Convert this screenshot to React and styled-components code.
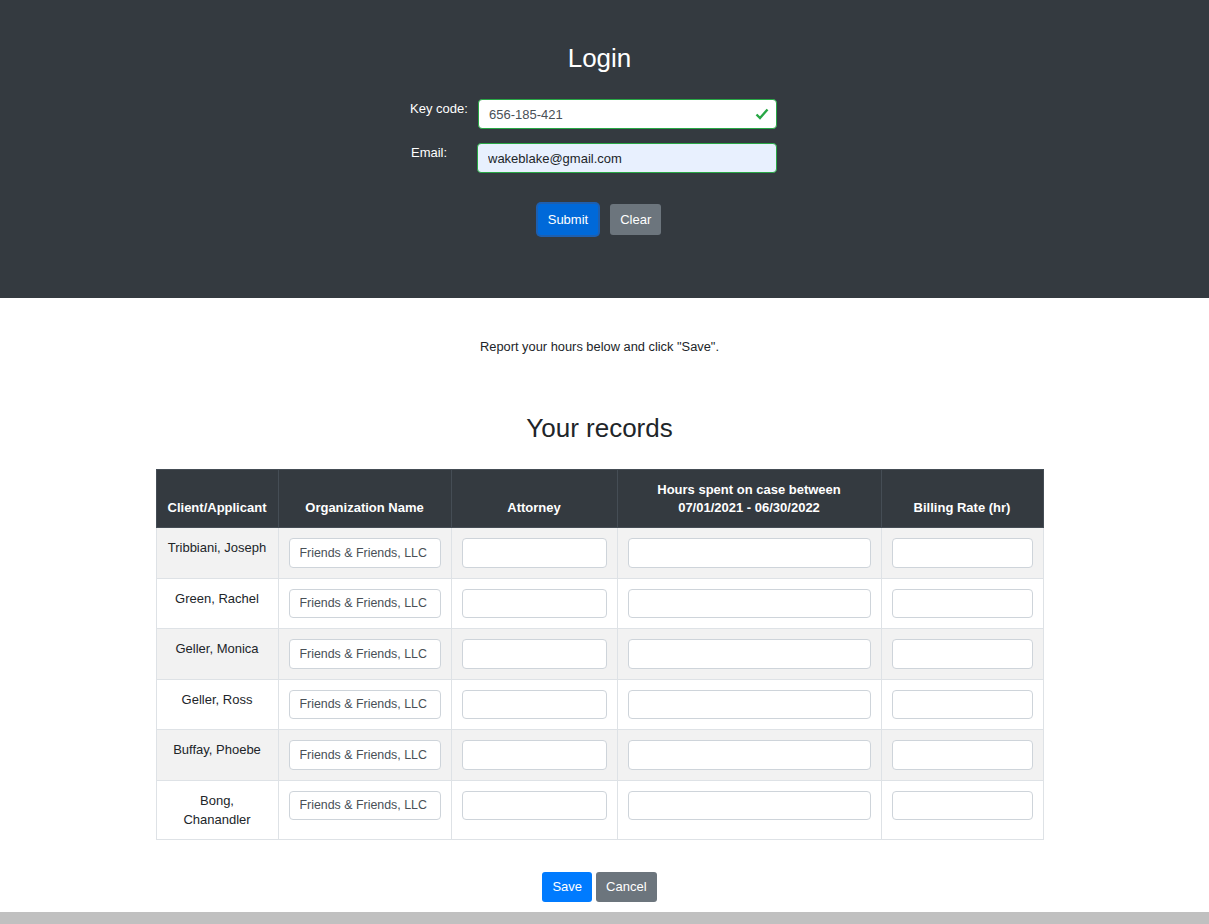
import { PureComponent } from "react";
import styled, { createGlobalStyle } from "styled-components";

const GlobalStyle = createGlobalStyle`
  body {
    margin: 0;
    font-family: "Liberation Sans", Arial, sans-serif;
    font-size: 13px;
    color: #212529;
    background: #fff;
  }
  * { box-sizing: border-box; }
`;

const Page = styled.div`
  padding-right: 10px;
`;

const LoginPanel = styled.section`
  background: #343a40;
  height: 298px;
  padding-top: 41px;
  margin-right: -10px;
  padding-right: 10px;
  color: #fff;
`;

const Title = styled.h2`
  margin: 0;
  text-align: center;
  font-weight: 400;
  font-size: 26px;
  line-height: 34px;
  color: ${(props) => props.color || "#212529"};
`;

const LoginForm = styled.div`
  width: 379px;
  padding-right: 12px;
  margin: 24px auto 0 auto;
  display: grid;
  grid-template-columns: 68px 299px;
  row-gap: 14px;
`;

const Label = styled.label`
  font-size: 13px;
  line-height: 18px;
  padding-top: 1px;
  color: #fff;
  padding-left: ${(props) => props.indent || 0}px;
`;

const FieldWrap = styled.div`
  position: relative;
  margin-left: ${(props) => props.nudge || 0}px;
`;

const TextField = styled.input`
  width: 100%;
  height: ${(props) => props.h || 30}px;
  padding: 0 10px;
  font-family: "Liberation Sans", Arial, sans-serif;
  font-size: ${(props) => props.size || 13}px;
  color: ${(props) => (props.filled ? "#212529" : "#495057")};
  background: ${(props) => (props.filled ? "#e8f0fe" : "#fff")};
  border: 1px solid ${(props) => (props.valid ? "#28a745" : "#ced4da")};
  border-radius: 4px;
  outline: none;
`;

const Check = styled.svg`
  position: absolute;
  right: 8px;
  top: 8px;
`;

const ButtonRow = styled.div`
  display: flex;
  justify-content: center;
  align-items: center;
  gap: ${(props) => props.gap}px;
  margin-top: ${(props) => props.top}px;
`;

const Button = styled.button`
  height: ${(props) => props.h || 31}px;
  padding: 0 10px;
  border: none;
  border-radius: 3px;
  font-family: "Liberation Sans", Arial, sans-serif;
  font-size: 13px;
  color: #fff;
  background: ${(props) =>
    props.variant === "secondary" ? "#6c757d" : props.focused ? "#0069d9" : "#007bff"};
  box-shadow: ${(props) => (props.focused ? "0 0 0 2px #1d5fb0" : "none")};
`;

const Intro = styled.p`
  margin: 40px 0 0 0;
  text-align: center;
  font-size: 12.85px;
  line-height: 18px;
`;

const RecordsTitle = styled(Title)`
  margin-top: 55px;
`;

const Table = styled.table`
  width: 887px;
  margin: 24px auto 0 auto;
  border-collapse: collapse;
  table-layout: fixed;
`;

const HeadCell = styled.th`
  background: #343a40;
  color: #fff;
  font-weight: 700;
  font-size: 13px;
  line-height: 18px;
  padding: 11px 10px 10px 10px;
  vertical-align: bottom;
  text-align: center;
  border: 1px solid #454d55;
`;

const Row = styled.tr`
  background: ${(props) => (props.striped ? "#f2f2f2" : "#fff")};
`;

const Cell = styled.td`
  border: 1px solid #dee2e6;
  padding: 10px;
  vertical-align: top;
  text-align: center;
  font-size: 13px;
  line-height: 19px;
`;

const Footer = styled.div`
  margin-top: 10px;
  margin-right: -10px;
  height: 14px;
  background: #c0c0c0;
`;

const clients = [
  "Tribbiani, Joseph",
  "Green, Rachel",
  "Geller, Monica",
  "Geller, Ross",
  "Buffay, Phoebe",
  "Bong, Chanandler",
];

export default class App extends PureComponent {
  render() {
    return (
      <Page>
        <GlobalStyle />
        <LoginPanel>
          <Title color="#fff">Login</Title>
          <LoginForm>
            <Label>Key code:</Label>
            <FieldWrap>
              <TextField valid defaultValue="656-185-421" />
              <Check width="14" height="14" viewBox="0 0 14 14">
                <path d="M1.5 7.5 L5 11 L12.5 2.5" fill="none" stroke="#28a745" strokeWidth="2.4" />
              </Check>
            </FieldWrap>
            <Label indent={1}>Email:</Label>
            <FieldWrap nudge={-1}>
              <TextField valid filled defaultValue="wakeblake@gmail.com" />
            </FieldWrap>
          </LoginForm>
          <ButtonRow gap={12} top={31}>
            <Button focused>Submit</Button>
            <Button variant="secondary">Clear</Button>
          </ButtonRow>
        </LoginPanel>

        <Intro>Report your hours below and click "Save".</Intro>
        <RecordsTitle>Your records</RecordsTitle>

        <Table>
          <colgroup>
            <col style={{ width: 122 }} />
            <col style={{ width: 173 }} />
            <col style={{ width: 166 }} />
            <col style={{ width: 264 }} />
            <col style={{ width: 162 }} />
          </colgroup>
          <thead>
            <tr>
              <HeadCell>Client/Applicant</HeadCell>
              <HeadCell>Organization Name</HeadCell>
              <HeadCell>Attorney</HeadCell>
              <HeadCell>
                Hours spent on case between
                <br />
                07/01/2021 - 06/30/2022
              </HeadCell>
              <HeadCell>Billing Rate (hr)</HeadCell>
            </tr>
          </thead>
          <tbody>
            {clients.map((name, i) => (
              <Row key={name} striped={i % 2 === 0}>
                <Cell>{name}</Cell>
                <Cell>
                  <TextField h={29.5} size={12.4} defaultValue="Friends & Friends, LLC" />
                </Cell>
                <Cell>
                  <TextField h={29.5} />
                </Cell>
                <Cell>
                  <TextField h={29.5} />
                </Cell>
                <Cell>
                  <TextField h={29.5} />
                </Cell>
              </Row>
            ))}
          </tbody>
        </Table>

        <ButtonRow gap={4} top={32}>
          <Button h={30}>Save</Button>
          <Button h={30} variant="secondary">Cancel</Button>
        </ButtonRow>
        <Footer />
      </Page>
    );
  }
}
